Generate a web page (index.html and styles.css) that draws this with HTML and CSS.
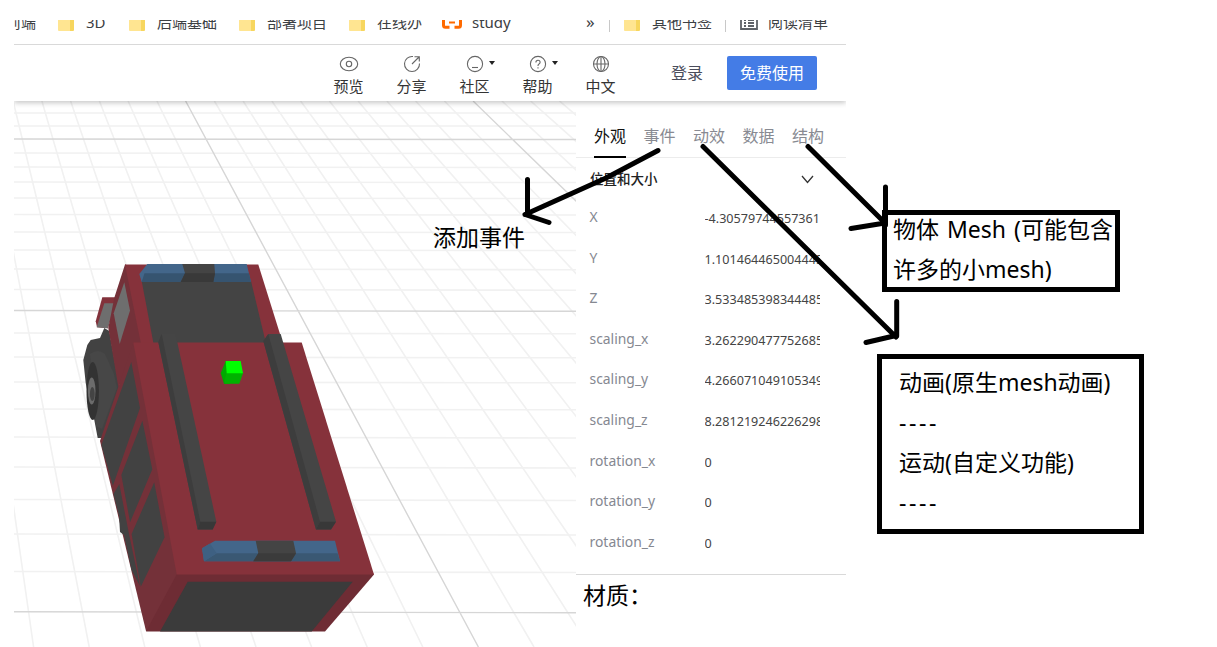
FILE: index.html
```html
<!DOCTYPE html>
<html lang="zh-CN">
<head>
<meta charset="utf-8">
<title>3D 编辑器</title>
<link rel="stylesheet" href="styles.css">
</head>
<body>
<div class="page">
  <div class="app">
    <div class="bookmarks">
      <span class="bm bm-first"><span class="bm-cut">前端</span></span>
      <span class="bm bm-3d"><i class="folder"></i>3D</span>
      <span class="bm bm-back"><i class="folder"></i>后端基础</span>
      <span class="bm bm-deploy"><i class="folder"></i>部署项目</span>
      <span class="bm bm-online"><i class="folder"></i>在线办</span>
      <span class="bm bm-study"><svg class="ali" width="20" height="16" viewBox="0 0 20 16"><path d="M7.500 2H3.500Q1.500 2 1.500 4v7.200q0 2 2 2H7.500M12.500 2h4q2 0 2 2v7.200q0 2-2 2H12.500" fill="none" stroke="#ff6a00" stroke-width="3"/><path d="M7 8.500h6" stroke="#ff6a00" stroke-width="2"/></svg>study</span>
      <span class="bm bm-more">»</span>
      <i class="sep"></i>
      <span class="bm bm-other"><i class="folder"></i>其他书签</span>
      <i class="sep sep-two"></i>
      <span class="bm bm-read"><svg width="18" height="17" viewBox="0 0 18 17"><path d="M1 2h16v13H1zM4 6h2M8 6h6M4 9h2M8 9h6M4 12h2M8 12h6" fill="none" stroke="#5f6368" stroke-width="1.800"/></svg>阅读清单</span>
    </div>
    <div class="toolbar">
      <div class="tool"><span class="tool-icon"><svg width="20" height="18" viewBox="0 0 20 18"><ellipse cx="10" cy="9" rx="8.700" ry="6.700"/><circle cx="10" cy="9" r="2.700"/></svg></span>预览</div>
      <div class="tool"><span class="tool-icon"><svg width="20" height="18" viewBox="0 0 20 18"><path d="M11 1.500A7.500 7.500 0 1 0 17.500 8.500M10 9l7-7M12.500 1.700H17.300V6.500"/></svg></span>分享</div>
      <div class="tool"><span class="tool-icon"><svg width="20" height="18" viewBox="0 0 20 18"><circle cx="10" cy="9" r="7.600"/><path d="M7 12.500h6"/></svg><i class="caret"></i></span>社区</div>
      <div class="tool"><span class="tool-icon"><svg width="20" height="18" viewBox="0 0 20 18"><circle cx="10" cy="9" r="7.600"/><path d="M7.900 7.400Q7.900 5.300 10 5.300T12.100 7.300Q12.100 8.400 11 9T10 11M10 12.200v1.300"/></svg><i class="caret"></i></span>帮助</div>
      <div class="tool"><span class="tool-icon"><svg width="20" height="18" viewBox="0 0 20 18"><circle cx="10" cy="9" r="7.500"/><ellipse cx="10" cy="9" rx="4" ry="7.500"/><path d="M10 1.500v15M2.500 9h15"/></svg></span>中文</div>
      <span class="login">登录</span>
      <span class="try">免费使用</span>
    </div>
    <div class="work">
      <div class="scene">
        <svg width="562" height="546" viewBox="14 101 562 546">
          <g fill="none" stroke-width="1.600" stroke="#f1f1f1">
            <path d="M14 113h562M14 126h562M14 153l562 .5M14 167l562 .5M14 182l562 .5M14 198l562 .5M14 214.500l562 .5M14 232l562 .5M14 250l562 .5M14 269l562 .7M14 289.500l562 .7M14 333l562 .8M14 357l562 .8M14 382l562 .8M14 409l562 .8M14 437l562 1M14 467l562 1M14 499.500l562 1M14 534l562 1M14 571.500l562 1"/>
            <path d="M-44.400 101L33.600 647M-15.700 101L89.200 647M13.100 101L144.800 647M41.900 101L200.400 647M70.600 101L256 647M99.400 101L311.600 647M128.100 101L367.200 647M156.900 101L422.800 647M214.400 101L534 647M243.100 101L589.600 647M271.900 101L645.200 647M300.600 101L700.800 647M329.400 101L756.400 647M358.100 101L812 647M386.900 101L867.600 647M415.600 101L923.200 647M444.400 101L978.800 647M501.900 101L1090 647M530.600 101L1145.600 647M559.400 101L1201.200 647"/>
          </g>
          <path d="M14 139l562 .5M14 310.500l562 .8M14 611.700l562 1M185.600 101L478.400 647M473.100 101L1034.400 647" fill="none" stroke="#d6d6d6" stroke-width="1.400"/>
          <!-- wheel -->
          <path fill="#424242" d="M104.300 328l5 3 10 56-16 51h-5.600l-3.400-18-4.300-15-4.300-22-2.400-23 4-15 3.400-5 9.300-2z"/>
          <path fill="#474747" d="M90 354q8-6 15 0l9 20 3 14-15 41-6-3z"/>
          <ellipse cx="92.700" cy="391" rx="6.200" ry="29" fill="#333"/>
          <ellipse cx="91.700" cy="391" rx="3.800" ry="13.500" fill="#6c6c6c"/>
          <ellipse cx="92.300" cy="394" rx="2.400" ry="7" fill="#444"/>
          <!-- cab -->
          <path fill="#82323b" d="M102.300 297.300H117l-9 31-11-1-1.300-6z"/>
          <path fill="#6e6e6e" d="M104.300 303.300H115L107.700 328.300L96.700 327.300z"/>
          <path fill="#743139" d="M126 264.500L125 264.500L114.300 297.700L108.300 328L118.300 387L134 360L145 343z"/>
          <path fill="#86323b" d="M125 264.500H258.300L280 334v10H141z"/>
          <path fill="#6e6e6e" d="M124.300 282.300L130 310.500L119.700 344L113.700 313.300z"/>
          <path fill="#444" d="M141.700 281H251L266 343.500H153.500z"/>
          <path fill="#43668a" d="M147.300 264H246.700L251 282H141.700L139.300 274z"/>
          <path fill="#365470" d="M144.500 273.300H249L251 282H141.700z"/>
          <path fill="#444" d="M182.300 264H214.300L215 273.300 213.300 282H180.700L185 273.300z"/>
          <path fill="#393939" d="M185 273.300H215L213.300 282H180.700z"/>
          <!-- body -->
          <path fill="#743139" d="M134 342.500L133.300 342.500L100 441L146 631H150L180 574.500V560z"/>
          <path fill="#6e2c34" d="M176.700 574.500L180 573H373L374 574.500L325 631.500H146z"/>
          <path fill="#86323b" d="M133.300 342.500H301.700L374 574.500H176.700z"/>
          <path fill="#3b3b3b" d="M187.700 581.700H352.700L311.700 631.500H160z"/>
          <path fill="#424242" d="M131.300 362L140 408 112.900 485.700 101.400 445zM142.400 420.700L152.300 469.300 130.100 522.300 121.300 475zM154.200 482.300L164.600 537.300 140.800 586.700 131.600 534zM113.500 494L119.300 484 129 534 140 586 131.500 570 124 535 120 532 119 516z"/>
          <!-- roof rails -->
          <path fill="#454545" d="M158.300 342L161.700 334 175.500 334 216.300 521.700 212.700 529.500H197.700z"/>
          <path fill="#3d3d3d" d="M158.300 342L161.700 334 200.300 521.700 197.700 529.500z"/>
          <path fill="#383838" d="M200.300 521.700h16L212.700 529.500h-15z"/>
          <path fill="#454545" d="M263.300 341L268.300 334H280.700L336 521.700 331 529.500H316z"/>
          <path fill="#3d3d3d" d="M263.300 341L268.300 334 320 521.700 316 529.500z"/>
          <path fill="#383838" d="M320 521.700h16L331 529.500h-15z"/>
          <!-- rear light bar -->
          <path fill="#43668a" d="M215 540.700H335L340 561.300H204L202 548.300z"/>
          <path fill="#3a5873" d="M216.700 553.300H337.500L340 561.300H204z"/>
          <path fill="#3e6082" d="M202 548.300L210 543.500 216.700 553.300 204 561.300z"/>
          <path fill="#444" d="M255.700 540.700H293.300L296 553.300 291 561.300H253.300L258.300 553.300z"/>
          <path fill="#3b3b3b" d="M258.300 553.300H296L291 561.300H253.300z"/>
          <!-- gizmo cube -->
          <path fill="#00a800" d="M225.700 361L220.700 373 224 383.700H230V361z"/>
          <path fill="#00b200" d="M226.700 372H243V373.300L239.300 383.700H224z"/>
          <path fill="#0f0" d="M225.700 361H240.700L243 373.300H226.700z"/>
        </svg>
      </div>
      <div class="panel">
        <div class="tabs"><span class="tab active">外观</span><span class="tab">事件</span><span class="tab">动效</span><span class="tab">数据</span><span class="tab">结构</span></div>
        <div class="group"><span class="group-title">位置和大小</span><svg width="13" height="9" viewBox="0 0 13 9"><path d="M1 1l5.500 6.500L12 1" fill="none" stroke="#333" stroke-width="1.300"/></svg></div>
        <div class="rows">
          <div class="row"><span class="name">X</span><span class="value">-4.30579744557361</span></div>
          <div class="row"><span class="name">Y</span><span class="value">1.101464465004445</span></div>
          <div class="row"><span class="name">Z</span><span class="value">3.533485398344485</span></div>
          <div class="row"><span class="name">scaling_x</span><span class="value">3.262290477752685</span></div>
          <div class="row"><span class="name">scaling_y</span><span class="value">4.266071049105349</span></div>
          <div class="row"><span class="name">scaling_z</span><span class="value">8.281219246226298</span></div>
          <div class="row"><span class="name">rotation_x</span><span class="value">0</span></div>
          <div class="row"><span class="name">rotation_y</span><span class="value">0</span></div>
          <div class="row"><span class="name">rotation_z</span><span class="value">0</span></div>
        </div>
        <div class="material">材质：</div>
      </div>
    </div>
  </div>
  <div class="notes">
    <div class="note note-mesh"><p>物体 Mesh (可能包含</p><p>许多的小mesh)</p></div>
    <div class="note note-anim"><p>动画(原生mesh动画)</p><p class="dashes">----</p><p>运动(自定义功能)</p><p class="dashes">----</p></div>
  </div>
  <span class="callout">添加事件</span>
  <svg class="arrows" width="1217" height="647" viewBox="0 0 1217 647">
    <path d="M658 150.500L606 178L525 214.500M527.500 179.500V214M525 214.500L549 222.500M703 146.500L896 337M896.700 301.500V336M866 342.500L896 335.500M808 146.500L885 223M885.500 187V225M851 228.500L885 223" fill="none" stroke="#000" stroke-width="5" stroke-linecap="round"/>
  </svg>
</div>
</body>
</html>
```
FILE: styles.css
```css
* { box-sizing: border-box; }
body { margin: 0; background: #fff; font-family: "Noto Sans", "Noto Sans CJK SC", sans-serif; }
p { margin: 0; }
i { display: block; font-style: normal; }
.page { position: relative; display: flex; width: 1217px; height: 647px; overflow: hidden; padding: 20px 0 0 14px; }
.app { width: 832px; flex: none; display: flex; flex-direction: column; }

.bookmarks { height: 25px; flex: none; display: flex; overflow: hidden; border-bottom: 1px solid #d9d9d9; font-size: 15px; line-height: 20px; color: #3c4043; white-space: nowrap; }
.bm { display: flex; height: 20px; margin-top: -8px; flex: none; }
.bm svg { flex: none; margin-top: 2px; }
.bm-first { width: 44px; overflow: hidden; }
.bm-cut { margin-left: -8px; }
.bm-3d { width: 71px; }
.bm-back, .bm-deploy { width: 110px; }
.bm-online { width: 93px; }
.bm-study { width: 144px; font-size: 15px; }
.ali { margin-right: 10px; }
.bm-more { width: 23px; font-size: 17px; }
.bm-other { margin-left: 14px; width: 101px; }
.bm-read { margin-left: 14px; gap: 10px; }
.folder { width: 16px; height: 13px; margin: 6px 12px 0 0; background: linear-gradient(90deg, #ffe591 76%, #f7d65e 76%); border-radius: 1px; }
.sep { width: 1px; height: 12px; background: #c8c8c8; }

.toolbar { position: relative; height: 56px; flex: none; display: flex; padding-left: 303px; background: #fff; box-shadow: 0 2px 5px rgba(0, 0, 0, .22); clip-path: inset(0 0 -8px 0); }
.tool { width: 63px; flex: none; padding-top: 10px; text-align: center; font-size: 15px; line-height: 26px; color: #333; }
.tool-icon { display: flex; justify-content: center; height: 18px; position: relative; }
.tool-icon svg { fill: none; stroke: #666; stroke-width: 1.1; }
.caret { position: absolute; left: 46px; top: 6px; border: 3.5px solid transparent; border-top: 4px solid #222; border-bottom: 0; }
.login { margin: 16px 0 0 39px; width: 56px; font-size: 16px; line-height: 24px; color: #4a4d5c; }
.try { width: 90px; height: 34px; margin-top: 11px; border-radius: 2px; background: #447ce6; color: #fff; font-size: 16px; line-height: 34px; text-align: center; }

.work { flex: 1; display: flex; }
.scene { width: 562px; height: 546px; }
.scene svg { display: block; }
.panel { width: 270px; }
.tabs { height: 57px; display: flex; gap: 17.5px; padding: 19px 0 0 18px; border-bottom: 1px solid #ececec; }
.tab { font-size: 16px; line-height: 32px; color: #888a92; height: 38px; }
.tab.active { color: #111; border-bottom: 2px solid #000; }
.group { height: 39px; display: flex; align-items: center; justify-content: space-between; padding: 4px 32px 0 14px; font-size: 13.5px; font-weight: 500; color: #222; }
.group-title { padding-bottom: 3px; }
.rows { height: 378px; padding-left: 13.5px; border-bottom: 1px solid #d9d9d9; }
.row { height: 40.55px; display: flex; align-items: center; }
.name { width: 115px; padding-bottom: 1px; font-size: 13.9px; color: #858891; }
.value { width: 115px; overflow: hidden; white-space: nowrap; font-size: 12.6px; color: #444; padding-top: 3px; }
.material { padding: 3px 0 0 7px; font-size: 23px; line-height: 34px; color: #000; }

.notes { padding: 190px 0 0 31px; }
.note { border: 5px solid #000; font-size: 23px; line-height: 40px; color: #000; white-space: nowrap; }
.note-mesh { width: 238px; height: 82px; margin-left: 5px; padding-left: 6px; word-spacing: 2px; }
.note-mesh p { margin-top: -6px; margin-bottom: 6px; }
.note-anim { width: 267px; height: 180px; margin-top: 62px; padding: 3px 0 0 17px; }
.dashes { letter-spacing: 2.6px; }
.callout { position: absolute; left: 433px; top: 220px; font-size: 23px; line-height: 34px; color: #000; }
.arrows { position: absolute; left: 0; top: 0; }
```
